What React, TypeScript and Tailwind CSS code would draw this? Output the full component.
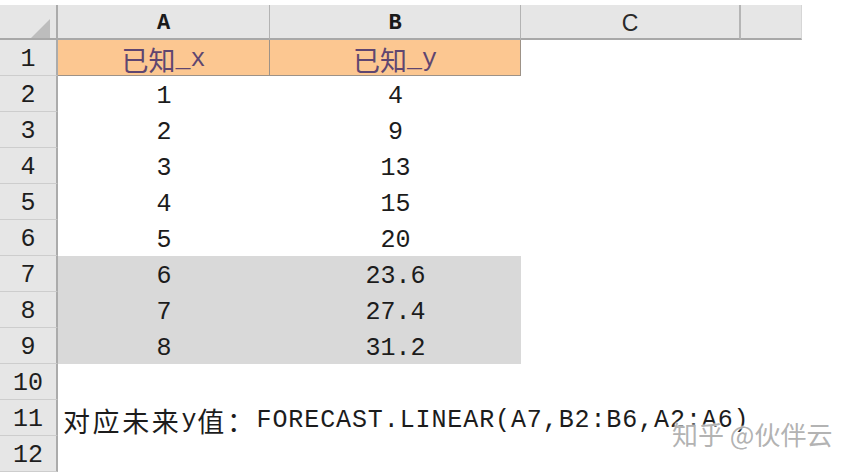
const mono = "font-['Liberation_Mono','Noto_Sans_CJK_SC',monospace]";
const cjk = "font-['Noto_Sans_CJK_SC','Noto_Sans',sans-serif]";

type RowProps = {
  n: number;
  a?: string;
  b?: string;
  kind?: "head" | "fill" | "plain";
};

function RowNum({ n }: { n: number }) {
  return (
    <div
      className={`w-[58px] shrink-0 h-full bg-[#e6e6e6] border-r-2 border-r-[#ababab] border-b border-b-[#cdcdcd] flex items-center justify-center pt-[5px] text-[25px] text-[#1e1e1e] ${mono}`}
    >
      {n}
    </div>
  );
}

function Row({ n, a, b, kind = "plain" }: RowProps) {
  if (kind === "head") {
    return (
      <div className="flex h-[36px]">
        <RowNum n={n} />
        <div className="w-[212px] shrink-0 h-full bg-[#fcc791] border-r border-b border-[#9d9287] flex items-center justify-center pt-[3px] text-[#5f4670]">
          <span className={`${cjk} text-[27px] leading-none`}>已知</span>
          <span className={`${mono} text-[25px] leading-none`}>_x</span>
        </div>
        <div className="w-[251px] shrink-0 h-full bg-[#fcc791] border-r border-b border-[#9d9287] flex items-center justify-center pt-[3px] text-[#5f4670]">
          <span className={`${cjk} text-[27px] leading-none`}>已知</span>
          <span className={`${mono} text-[25px] leading-none`}>_y</span>
        </div>
        <div className="flex-1" />
      </div>
    );
  }
  const bg = kind === "fill" ? "bg-[#d9d9d9]" : "bg-white";
  return (
    <div className="flex h-[36px]">
      <RowNum n={n} />
      <div className={`w-[212px] shrink-0 h-full ${bg} flex items-center justify-center pt-[5px] text-[25px] text-[#1c1c1c] ${mono}`}>
        {a}
      </div>
      <div className={`w-[251px] shrink-0 h-full ${bg} flex items-center justify-center pt-[5px] text-[25px] text-[#1c1c1c] ${mono}`}>
        {b}
      </div>
      <div className="flex-1" />
    </div>
  );
}

export default function App() {
  const data: [string, string][] = [
    ["1", "4"],
    ["2", "9"],
    ["3", "13"],
    ["4", "15"],
    ["5", "20"],
  ];
  const forecast: [string, string][] = [
    ["6", "23.6"],
    ["7", "27.4"],
    ["8", "31.2"],
  ];

  return (
    <div className="relative w-[854px] h-[473px] overflow-hidden bg-white">
      <div className="h-[5px]" />
      {/* column headers */}
      <div className="flex h-[35px]">
        <div className="w-[58px] shrink-0 h-full bg-[#e6e6e6] border-r-2 border-r-[#ababab] border-b-2 border-b-[#a8a8a8] relative">
          <svg className="absolute left-[31px] top-[14px]" width="19" height="19" viewBox="0 0 19 19">
            <polygon points="19,0 19,19 0,19" fill="#bdbdbd" />
          </svg>
        </div>
        <div className={`w-[212px] shrink-0 h-full bg-[#e6e6e6] border-r border-r-[#b3b3b3] border-b-2 border-b-[#a8a8a8] flex items-center justify-center pt-[4px] text-[22px] font-bold text-[#1a1a1a] ${mono}`}>
          A
        </div>
        <div className={`w-[251px] shrink-0 h-full bg-[#e6e6e6] border-r border-r-[#b3b3b3] border-b-2 border-b-[#a8a8a8] flex items-center justify-center pt-[4px] text-[22px] font-bold text-[#1a1a1a] ${mono}`}>
          B
        </div>
        <div className={`w-[220px] shrink-0 h-full bg-[#e6e6e6] border-r-2 border-r-[#b5b5b5] border-b-2 border-b-[#a8a8a8] flex items-center justify-center pt-[4px] text-[23px] text-[#2a2a2a] font-['Liberation_Sans',sans-serif]`}>
          C
        </div>
        <div className="w-[61px] shrink-0 h-full bg-[#e6e6e6] border-r border-r-[#d6d6d6] border-b-2 border-b-[#a8a8a8]" />
        <div className="flex-1" />
      </div>

      <Row n={1} kind="head" />
      {data.map(([a, b], i) => (
        <Row key={a} n={i + 2} a={a} b={b} />
      ))}
      {forecast.map(([a, b], i) => (
        <Row key={a} n={i + 7} a={a} b={b} kind="fill" />
      ))}
      <Row n={10} />

      <div className="flex h-[36px]">
        <RowNum n={11} />
        <div className="flex items-center pl-[5px] pt-[4px] whitespace-nowrap text-[#1c1c1c]">
          <span className={`${cjk} text-[27px] leading-none tracking-[2.6px]`}>对应未来</span>
          <span className={`${mono} text-[25px] leading-none tracking-[0.9px]`}>y</span>
          <span className={`${cjk} text-[27px] leading-none tracking-[2.6px]`}>值：</span>
          <span className={`${mono} text-[25px] leading-none tracking-[0.9px]`}>FORECAST.LINEAR(A7,B2:B6,A2:A6)</span>
        </div>
      </div>

      <Row n={12} />

      {/* watermark */}
      <div
        className={`absolute left-[672px] top-[421px] leading-none text-[26px] text-[#a9a9a9]/90 whitespace-nowrap ${cjk} [text-shadow:0_0_2px_#fff,0_0_2px_#fff]`}
      >
        知乎 @伙伴云
      </div>
    </div>
  );
}
